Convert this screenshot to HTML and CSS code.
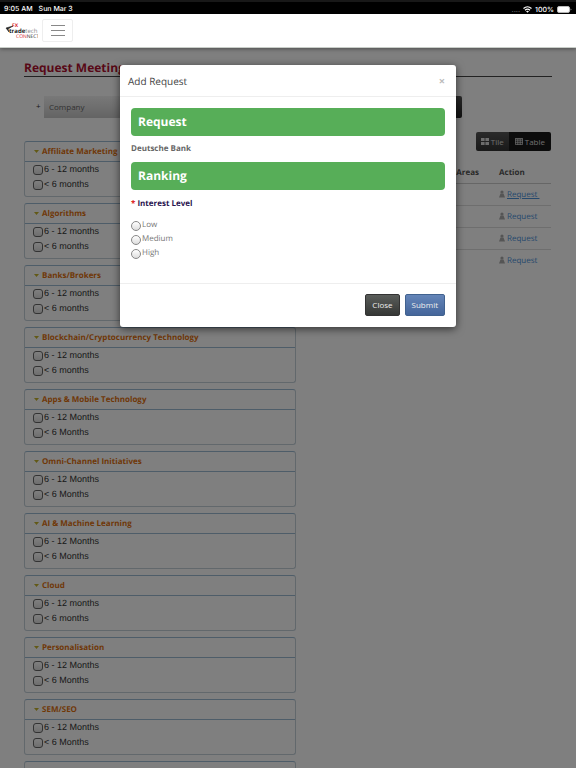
FILE: index.html
```html
<!doctype html>
<html lang="en">
<head>
  <meta charset="utf-8" />
  <meta name="viewport" content="width=device-width,initial-scale=1" />
  <title>Request Meetings</title>
  <link rel="stylesheet" href="styles.css">
</head>
<body>
  <div class="status">
    <span>9:05 AM</span>
    <span>Sun Mar 3</span>
    <span class="status-right">
      <span class="dots">....</span>
      <svg width="9" height="7" viewBox="0 0 18 14" fill="none" stroke="#fff" stroke-width="2.4"><path d="M1 5Q9-2 17 5M4 8.500Q9 4 14 8.500"/><path d="M9 13.500L6 10.500Q9 8 12 10.500Z" fill="#fff" stroke="none"/></svg>
      <span>100%</span>
      <svg width="15" height="7" viewBox="0 0 15 7"><rect x=".5" y=".5" width="12" height="6" rx="1.500" fill="#fff" stroke="#bbb"/><path d="M13.500 2.500v2q1-.3 1-1t-1-1" fill="#999"/></svg>
    </span>
  </div>

  <header class="navbar">
    <a class="logo" href="#" aria-label="FX TradeTech Connect">
      <svg width="33" height="22" viewBox="0 0 33 22" font-family="Open Sans, sans-serif">
        <path d="M8 6L1 8L4 12L3 9Z" fill="#222" stroke="#222" stroke-width=".6"/>
        <text x="7" y="7" font-size="5" font-weight="700" fill="#d8232a">FX</text>
        <text x="4" y="13" font-size="6" font-weight="700" fill="#222">trade<tspan font-weight="400" fill="#888">tech</tspan></text>
        <text x="11" y="18" font-size="5" fill="#d8232a">CON<tspan fill="#222">NECT</tspan></text>
      </svg>
    </a>
    <button class="menu" aria-label="Menu"><i></i><i></i><i></i></button>
  </header>

  <div class="page">
    <main>
      <h1>Request Meetings</h1>
      <form class="search">
        <span class="plus">+</span>
        <select aria-label="Search by"><option>Company</option></select>
        <button type="button" class="dark" aria-label="Search"></button>
      </form>

      <div class="cols">
        <div class="filters">
          <fieldset class="panel">
            <legend><span class="caret"></span>Affiliate Marketing</legend>
            <label><input type="checkbox">6 - 12 months</label>
            <label><input type="checkbox">&lt; 6 months</label>
          </fieldset>
          <fieldset class="panel">
            <legend><span class="caret"></span>Algorithms</legend>
            <label><input type="checkbox">6 - 12 months</label>
            <label><input type="checkbox">&lt; 6 months</label>
          </fieldset>
          <fieldset class="panel">
            <legend><span class="caret"></span>Banks/Brokers</legend>
            <label><input type="checkbox">6 - 12 months</label>
            <label><input type="checkbox">&lt; 6 months</label>
          </fieldset>
          <fieldset class="panel">
            <legend><span class="caret"></span>Blockchain/Cryptocurrency Technology</legend>
            <label><input type="checkbox">6 - 12 months</label>
            <label><input type="checkbox">&lt; 6 months</label>
          </fieldset>
          <fieldset class="panel">
            <legend><span class="caret"></span>Apps &amp; Mobile Technology</legend>
            <label><input type="checkbox">6 - 12 Months</label>
            <label><input type="checkbox">&lt; 6 Months</label>
          </fieldset>
          <fieldset class="panel">
            <legend><span class="caret"></span>Omni-Channel Initiatives</legend>
            <label><input type="checkbox">6 - 12 Months</label>
            <label><input type="checkbox">&lt; 6 Months</label>
          </fieldset>
          <fieldset class="panel">
            <legend><span class="caret"></span>AI &amp; Machine Learning</legend>
            <label><input type="checkbox">6 - 12 Months</label>
            <label><input type="checkbox">&lt; 6 Months</label>
          </fieldset>
          <fieldset class="panel">
            <legend><span class="caret"></span>Cloud</legend>
            <label><input type="checkbox">6 - 12 months</label>
            <label><input type="checkbox">&lt; 6 months</label>
          </fieldset>
          <fieldset class="panel">
            <legend><span class="caret"></span>Personalisation</legend>
            <label><input type="checkbox">6 - 12 Months</label>
            <label><input type="checkbox">&lt; 6 Months</label>
          </fieldset>
          <fieldset class="panel">
            <legend><span class="caret"></span>SEM/SEO</legend>
            <label><input type="checkbox">6 - 12 Months</label>
            <label><input type="checkbox">&lt; 6 Months</label>
          </fieldset>
          <fieldset class="panel"></fieldset>
        </div>

        <div class="results">
          <div class="views">
            <button><svg width="8" height="7" viewBox="0 0 8 7" fill="#fff"><path d="M0 0h3.600v3H0zM4.400 0H8v3H4.400zM0 4h3.600v3H0zM4.400 4H8v3H4.400z"/></svg>Tile</button>
            <button class="active"><svg width="8" height="7" viewBox="0 0 8 7" fill="none" stroke="#fff" stroke-width=".8"><path d="M.4.400h7.200v6.200H.4zM0 1h8M0 2.800h8M0 4.700h8M2.800 1v6M5.200 1v6"/></svg>Table</button>
          </div>
          <table>
            <thead><tr><th>Areas</th><th>Action</th></tr></thead>
            <tbody>
              <tr><td></td><td><svg class="user" viewBox="0 0 6 8"><circle cx="3" cy="2" r="1.600"/><path d="M1.500 3.500h3L6 7.500H0z"/></svg><a class="hover" href="#">Request&nbsp;</a></td></tr>
              <tr><td></td><td><svg class="user" viewBox="0 0 6 8"><circle cx="3" cy="2" r="1.600"/><path d="M1.500 3.500h3L6 7.500H0z"/></svg><a href="#">Request</a></td></tr>
              <tr><td></td><td><svg class="user" viewBox="0 0 6 8"><circle cx="3" cy="2" r="1.600"/><path d="M1.500 3.500h3L6 7.500H0z"/></svg><a href="#">Request</a></td></tr>
              <tr><td></td><td><svg class="user" viewBox="0 0 6 8"><circle cx="3" cy="2" r="1.600"/><path d="M1.500 3.500h3L6 7.500H0z"/></svg><a href="#">Request</a></td></tr>
            </tbody>
          </table>
        </div>
      </div>
    </main>

    <!-- modal -->
    <div class="backdrop">
      <form class="modal" role="dialog" aria-labelledby="modalTitle">
        <div class="modal-header">
          <h2 id="modalTitle">Add Request</h2>
          <button type="button" class="x" aria-label="Dismiss">×</button>
        </div>
        <div class="modal-body">
          <h3>Request</h3>
          <p class="company">Deutsche Bank</p>
          <h3>Ranking</h3>
          <p class="question" id="level"><span class="req">*</span> Interest Level</p>
          <div class="radios" role="radiogroup" aria-labelledby="level">
            <label><input type="radio" name="level">Low</label>
            <label><input type="radio" name="level">Medium</label>
            <label><input type="radio" name="level">High</label>
          </div>
        </div>
        <div class="modal-footer">
          <button type="button" class="btn">Close</button>
          <button type="button" class="btn primary">Submit</button>
        </div>
      </form>
    </div>
  </div>
</body>
</html>
```
FILE: styles.css
```css
* { box-sizing:border-box; }
body { margin:0; height:100vh; display:flex; flex-direction:column; overflow:hidden; background:#fff; color:#555; font:8px/14px "Open Sans", sans-serif; text-rendering:geometricPrecision; }
button, select, input { font:inherit; margin:0; }
h1, h2, h3, p { margin:0; }

.status { display:flex; gap:6px; height:14px; padding:2px 4px 0; background:#000; border-top:2px solid #181818; color:#fff; font:500 7px/9px Inter, sans-serif; }
.status-right { display:flex; align-items:center; gap:3px; margin-left:auto; }
.dots { color:#777; line-height:7px; }

.navbar { position:relative; z-index:2; display:flex; align-items:center; gap:4px; height:34px; padding:0 5px; background:#fff; border-bottom:1px solid #c9cec9; box-shadow:0 1px 4px rgba(0,0,0,.4); }
.logo { display:flex; }
.logo svg { display:block; }
.menu { display:flex; flex-direction:column; align-items:center; justify-content:center; gap:4px; width:31px; height:23px; padding:0; background:#fff; border:1px solid #eee; border-radius:2px; }
.menu i { width:14px; height:1px; background:#888; }

.page { position:relative; flex:1; min-height:0; overflow:hidden; }
main { padding:12px 24px 0; }
h1 { font-size:12px; line-height:15px; padding-bottom:1px; color:#b0102f; border-bottom:1px solid #444; }
.search { display:flex; align-items:center; height:22px; margin:19px 90px 23px 12px; }
.plus { width:8px; color:#333; }
.search select { flex:1; height:22px; padding:0 5px; appearance:none; border:0; background:linear-gradient(#f2f2f2, #c8c8c8); color:#666; }
.dark { width:32px; height:22px; border:0; border-radius:0 2px 2px 0; background:linear-gradient(#555, #222); }

.cols { display:grid; grid-template-columns:272px 1fr; gap:10px; }
.filters { display:flex; flex-direction:column; gap:6px; }
.panel { height:56px; margin:0; padding:0; min-width:0; border:1px solid #c4d0d9; border-top-color:#9dbbd2; border-radius:3px; font:9px/15px "Liberation Sans", Arial, sans-serif; color:#333; }
.panel legend { float:left; display:flex; align-items:center; width:100%; height:20px; padding:0 9px; border-bottom:1px solid #9dbbd2; color:#e0700e; font:bold 8px/19px "Open Sans", sans-serif; }
.caret { width:5px; height:3px; margin-right:3px; background:#c5b32c; clip-path:polygon(0 0, 100% 0, 50% 100%); }
.panel label { display:flex; align-items:center; clear:both; gap:1px; padding-left:8px; }
input { appearance:none; width:10px; height:10px; flex:none; border:1px solid #666; border-radius:3px; background:linear-gradient(#fff, #ddd); }
.panel input { margin-top:1px; }

.results { min-width:0; }
.views { display:flex; justify-content:flex-end; height:19px; margin-top:-9px; padding-right:1px; }
.views button { display:flex; align-items:center; gap:2px; padding:0 5px; border:0; border-radius:2px 0 0 2px; background:linear-gradient(#555, #333); color:#ddd; }
.views .active { padding:0 6px; border-radius:0 2px 2px 0; background:#191919; }
.views svg { opacity:.8; }
table { width:100%; margin-top:11px; padding-right:1px; border-collapse:separate; border-spacing:0; table-layout:fixed; }
th, td { height:22px; padding:0; text-align:left; border-bottom:1px solid #ddd; }
tr:last-child td { border-bottom:0; }
th { color:#555; }
th:first-child { padding-right:20px; text-align:right; }
th:last-child { width:52px; }
thead th { border-bottom-color:#ccc; }
td a { color:#4c92da; text-decoration:none; }
td a.hover { text-decoration:underline; }
.user { width:6px; height:8px; margin-right:2px; vertical-align:-1px; fill:#aaa; }

.backdrop { position:absolute; inset:0; padding:17px 20px; background:rgba(0,0,0,.5); }
.modal { width:100%; max-width:336px; margin:0 auto; background:#fff; border-radius:3px; box-shadow:0 2px 8px rgba(0,0,0,.6); }
.modal-header { display:flex; justify-content:space-between; align-items:center; height:32px; padding:0 11px 0 8px; border-bottom:1px solid #eee; }
h2 { font-size:10px; font-weight:normal; color:#444; }
.x { padding:0; border:0; background:none; color:#bbb; font-size:11px; font-weight:bold; }
.modal-body { padding:11px 11px 23px; }
h3 { height:28px; padding:0 7px; background:#57ae58; border-radius:4px; color:#fff; font-size:12px; line-height:28px; }
.company { padding:6px 0; font-weight:bold; color:#666; }
.question { padding:7px 0; font-weight:bold; color:#2a1550; }
.req { color:#d22; }
.radios label { display:flex; align-items:center; gap:1px; height:14px; color:#777; }
.radios input { border-radius:50%; border-color:#888; margin-top:1px; }
.modal-footer { display:flex; justify-content:flex-end; gap:5px; padding:10px 11px 11px; border-top:1px solid #eee; }
.btn { height:22px; padding:0 6px; border:1px solid #333; border-radius:2px; background:linear-gradient(#5a5d5a, #353735); color:#eee; }
.btn.primary { border-color:#41628f; background:linear-gradient(#6485b8, #44659a); }
```
